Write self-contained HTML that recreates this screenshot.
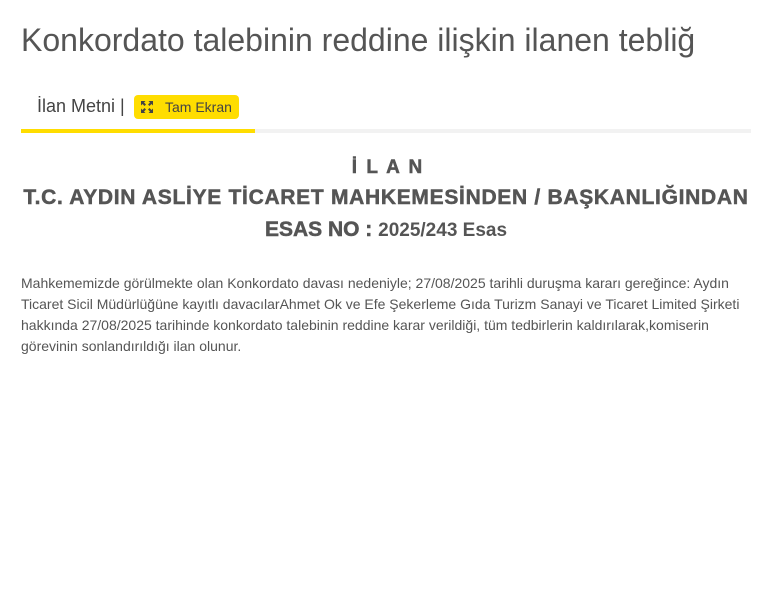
<!DOCTYPE html>
<html><head><meta charset="utf-8"><style>
body{margin:0;background:#fff;font-family:"Liberation Sans",Arial,sans-serif;color:#555;width:772px;height:608px;overflow:hidden;position:relative}
h1{position:absolute;left:21px;top:22px;margin:0;font-weight:normal;font-size:32px;color:#555;white-space:nowrap}
.tab{position:absolute;left:37px;top:95px;font-size:18px;line-height:22px;color:#444}
.btn{position:absolute;left:134px;top:95px;width:105px;height:24px;background:#fd0;border-radius:4px;font-size:14px;line-height:24px;color:#444}
.btn span{position:absolute;left:31px}
.bar{position:absolute;left:21px;top:129px;width:730px;height:4px;background:#f2f2f2}
.bar div{width:234px;height:4px;background:#fd0}
.c{position:absolute;left:21px;width:730px;text-align:center;font-weight:bold;color:#555;white-space:nowrap;-webkit-text-stroke:0.5px #555}
p{position:absolute;left:21px;top:273px;width:735px;margin:0;font-size:14px;line-height:21px;color:#555}
</style></head><body>
<h1>Konkordato talebinin reddine ilişkin ilanen tebliğ</h1>
<div class="tab">İlan Metni |</div>
<div class="btn"><svg style="position:absolute;left:7px;top:6px" width="12" height="12" viewBox="0 0 12 12" fill="#444"><path d="M0 0h4.5L3 1.5 5 3.5 3.5 5 1.5 3 0 4.5zM12 0v4.5L10.5 3 8.5 5 7 3.5 9 1.5 7.5 0zM0 12V7.5L1.5 9 3.5 7 5 8.5 3 10.5 4.5 12zM12 12H7.5L9 10.5 7 8.5 8.5 7 10.5 9 12 7.5z"/></svg><span>Tam Ekran</span></div>
<div class="bar"><div></div></div>
<div class="c" style="top:157px;font-size:19px;letter-spacing:2px;padding-left:2px">İ L A N</div>
<div class="c" style="top:186px;font-size:21px;letter-spacing:0.7px">T.C. AYDIN ASLİYE TİCARET MAHKEMESİNDEN / BAŞKANLIĞINDAN</div>
<div class="c" style="top:218px;font-size:21px">ESAS NO : <span style="font-size:19px;-webkit-text-stroke:0">2025/243 Esas</span></div>
<p>Mahkememizde görülmekte olan Konkordato davası nedeniyle; 27/08/2025 tarihli duruşma kararı gereğince: Aydın Ticaret Sicil Müdürlüğüne kayıtlı davacılarAhmet Ok ve Efe Şekerleme Gıda Turizm Sanayi ve Ticaret Limited Şirketi hakkında 27/08/2025 tarihinde konkordato talebinin reddine karar verildiği, tüm tedbirlerin kaldırılarak,komiserin görevinin sonlandırıldığı ilan olunur.</p>
</body></html>
